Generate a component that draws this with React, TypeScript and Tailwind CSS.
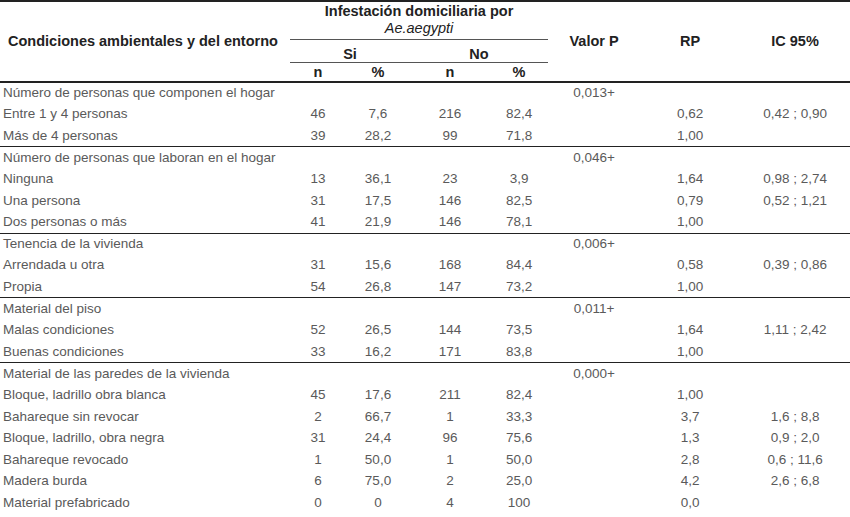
type Row = [string, string, string, string, string, string, string, string];

const groups: Row[][] = [
  [
    ['Número de personas que componen el hogar', '', '', '', '', '0,013+', '', ''],
    ['Entre 1 y 4 personas', '46', '7,6', '216', '82,4', '', '0,62', '0,42 ; 0,90'],
    ['Más de 4 personas', '39', '28,2', '99', '71,8', '', '1,00', ''],
  ],
  [
    ['Número de personas que laboran en el hogar', '', '', '', '', '0,046+', '', ''],
    ['Ninguna', '13', '36,1', '23', '3,9', '', '1,64', '0,98 ; 2,74'],
    ['Una persona', '31', '17,5', '146', '82,5', '', '0,79', '0,52 ; 1,21'],
    ['Dos personas o más', '41', '21,9', '146', '78,1', '', '1,00', ''],
  ],
  [
    ['Tenencia de la vivienda', '', '', '', '', '0,006+', '', ''],
    ['Arrendada u otra', '31', '15,6', '168', '84,4', '', '0,58', '0,39 ; 0,86'],
    ['Propia', '54', '26,8', '147', '73,2', '', '1,00', ''],
  ],
  [
    ['Material del piso', '', '', '', '', '0,011+', '', ''],
    ['Malas condiciones', '52', '26,5', '144', '73,5', '', '1,64', '1,11 ; 2,42'],
    ['Buenas condiciones', '33', '16,2', '171', '83,8', '', '1,00', ''],
  ],
  [
    ['Material de las paredes de la vivienda', '', '', '', '', '0,000+', '', ''],
    ['Bloque, ladrillo obra blanca', '45', '17,6', '211', '82,4', '', '1,00', ''],
    ['Bahareque sin revocar', '2', '66,7', '1', '33,3', '', '3,7', '1,6 ; 8,8'],
    ['Bloque, ladrillo, obra negra', '31', '24,4', '96', '75,6', '', '1,3', '0,9 ; 2,0'],
    ['Bahareque revocado', '1', '50,0', '1', '50,0', '', '2,8', '0,6 ; 11,6'],
    ['Madera burda', '6', '75,0', '2', '25,0', '', '4,2', '2,6 ; 6,8'],
    ['Material prefabricado', '0', '0', '4', '100', '', '0,0', ''],
  ],
];

export default function App() {
  return (
    <div className="w-[850px] bg-white font-['Liberation_Sans',Arial,sans-serif]">
      <table className="w-[850px] table-fixed border-collapse">
        <colgroup>
          <col className="w-[290px]" />
          <col className="w-[56px]" />
          <col className="w-[64px]" />
          <col className="w-[80px]" />
          <col className="w-[58px]" />
          <col className="w-[92px]" />
          <col className="w-[100px]" />
          <col className="w-[110px]" />
        </colgroup>
        <thead className="text-[14.5px] font-bold text-[#222]">
          <tr className="border-t-2 border-[#222] h-[38px]">
            <th rowSpan={3} className="text-left pl-2 align-middle whitespace-nowrap">
              Condiciones ambientales y del entorno
            </th>
            <th colSpan={4} className="border-b border-[#555] leading-[17px] align-middle p-0 whitespace-nowrap">
              Infestación domiciliaria por
              <br />
              <span className="italic font-normal">Ae.aegypti</span>
            </th>
            <th rowSpan={3} className="align-middle">Valor P</th>
            <th rowSpan={3} className="align-middle">RP</th>
            <th rowSpan={3} className="align-middle">IC 95%</th>
          </tr>
          <tr className="h-[23px]">
            <th colSpan={2} className="border-b border-[#555] pt-[6px] pb-0 leading-[16px]">Si</th>
            <th colSpan={2} className="border-b border-[#555] pt-[6px] pb-0 leading-[16px]">No</th>
          </tr>
          <tr className="h-[20px] border-b-2 border-[#222]">
            <th className="leading-[18px] p-0">n</th>
            <th className="leading-[18px] p-0">%</th>
            <th className="leading-[18px] p-0">n</th>
            <th className="leading-[18px] p-0">%</th>
          </tr>
        </thead>
        {groups.map((rows, gi) => (
          <tbody key={gi} className="text-[13.5px] text-[#5a5a5a] border-b border-[#222] last:border-b-0">
            {rows.map((r, ri) => (
              <tr key={ri} className="h-[21.6px]">
                <td className="pl-[3px] whitespace-nowrap">{r[0]}</td>
                {r.slice(1).map((c, ci) => (
                  <td key={ci} className="text-center whitespace-nowrap">
                    {c}
                  </td>
                ))}
              </tr>
            ))}
          </tbody>
        ))}
      </table>
    </div>
  );
}
